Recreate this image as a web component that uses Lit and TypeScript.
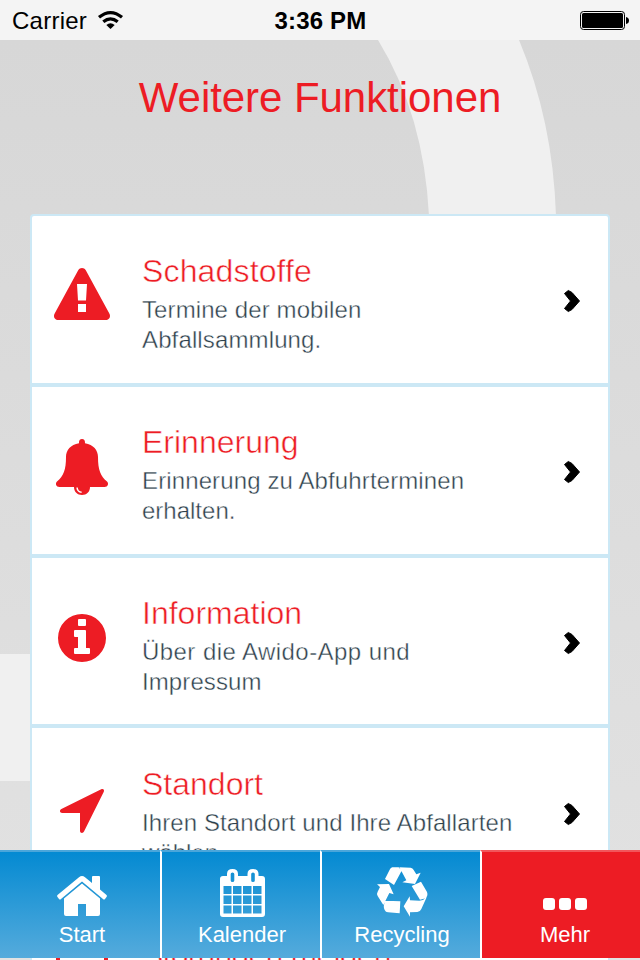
import { LitElement, html, css, svg } from "lit";
import { customElement } from "lit/decorators.js";

const icons = {
  warning: svg`<path fill-rule="evenodd" d="M24.2 2.2C26 -.7 30 -.7 31.8 2.2L55.2 45.2C57.2 48.6 55.2 52 51.6 52H4.4C.8 52-1.2 48.6.8 45.2ZM23 16L24 32.4H32L33 16ZM24 36V44H32V36Z"/>`,
  bell: svg`<path fill-rule="evenodd" d="M26 0C28 0 29.3 1.4 29 4.3C37.500 5.500 42 11.500 42 18C42 31 44.500 37 51 42.500C53 44.500 52 48 48.500 48H34C34 52.800 30.600 56 26 56S18 52.800 18 48H3.500C0 48-1 44.500 1 42.500C7.500 37 10 31 10 18C10 11.500 14.500 5.500 23 4.300C22.700 1.400 24 0 26 0ZM20.400 48.500C20.400 51.600 22.600 53.900 25.600 53.900V52.600C23.500 52.600 21.800 50.800 21.800 48.500Z"/>`,
  info: svg`<path fill-rule="evenodd" d="M24 0A24 24 0 1 0 24 48A24 24 0 1 0 24 0ZM20 6Q20 5 21 5H27Q28 5 28 6V11Q28 12 27 12H21Q20 12 20 11ZM16 17Q16 16 17 16H27Q28 16 28 17V34H31Q32 34 32 35V39Q32 40 31 40H17Q16 40 16 39V35Q16 34 17 34H20V23H17Q16 23 16 22Z"/>`,
  arrow: svg`<path d="M41.200.3C43.200-.6 44.600.8 43.800 2.700L24 42.500C23 44.700 20 44.200 20 41.700V24H2.200C-.3 24-.8 21 1.400 20Z"/>`,
  frame: svg`<path fill-rule="evenodd" d="M0 0H52V56H0ZM4 4V52H48V4Z"/>`,
};

/* s: letter spacing per text, box: height in which the icon is centred */
const rows = [
  { title: { t: "Schadstoffe", s: 0.15 }, lines: [{ t: "Termine der mobilen", s: 0.1 }, { t: "Abfallsammlung.", s: 0.13 }], icon: "warning", w: 56, h: 52, box: 156 },
  { title: { t: "Erinnerung", s: 0 }, lines: [{ t: "Erinnerung zu Abfuhrterminen", s: 0.12 }, { t: "erhalten.", s: 0 }], icon: "bell", w: 52, h: 56, box: 160 },
  { title: { t: "Information", s: 0 }, lines: [{ t: "Über die Awido-App und", s: 0.44 }, { t: "Impressum", s: 0.1 }], icon: "info", w: 48, h: 48, box: 160 },
  { title: { t: "Standort", s: 0 }, lines: [{ t: "Ihren Standort und Ihre Abfallarten", s: 0.1 }, { t: "wählen.", s: 0 }], icon: "arrow", w: 44, h: 44, box: 164 },
  { title: { t: "Störungen melden", s: -0.8 }, lines: [], icon: "frame", w: 52, h: 56, box: 156 },
] as const;

const tabs = [
  {
    label: "Start", cls: "first", icon: html`<svg class="home" width="50" height="40" viewBox="0 0 50 40"><path d="M25 0Q26.500 0 28 1.300L35 7V1Q35 0 36 0H42Q43 0 43 1V13.500L49.500 19Q50.500 20 49.500 21L48 23Q47 24 46 23L25 5.500L4 23Q3 24 2 23L.5 21Q-.5 20 .5 19L22 1.300Q23.500 0 25 0Z"/><path d="M25 7.500L43 22.500V38Q43 40 41 40H29V28H21V40H9Q7 40 7 38V22.500Z"/></svg>`,
  },
  {
    label: "Kalender", cls: "", icon: html`<svg class="cal" width="45" height="48" viewBox="0 0 45 48"><path fill-rule="evenodd" d="M3 7H7V5Q7 0 12.500 0T18 5V7H27.500V5Q27.500 0 33 0T38.500 5V7H42Q45 7 45 10V45Q45 48 42 48H3Q0 48 0 45V10Q0 7 3 7Z
      M10.700 5V11.500Q10.700 13 12.500 13T14.300 11.500V5Q14.300 3.500 12.500 3.500T10.700 5ZM31.200 5V11.500Q31.200 13 33 13T34.800 11.500V5Q34.800 3.500 33 3.500T31.200 5Z
      M3.500 17h8v8h-8zM13 17h8.500v8h-8.500zM23 17h8.500v8h-8.500zM33 17h8.500v8h-8.500zM3.500 26.500h8v8.500h-8zM13 26.500h8.500v8.500h-8.500zM23 26.500h8.500v8.500h-8.500zM33 26.500h8.500v8.500h-8.500zM3.500 36.500h8v8h-8zM13 36.500h8.500v8h-8.500zM23 36.500h8.500v8h-8.500zM33 36.500h8.500v8h-8.500z"/></svg>`,
  },
  {
    label: "Recycling", cls: "", icon: html`<svg class="cal" width="51" height="50" viewBox="171 291 153 150"><path d="M217 292L236 292L245 302L222 345L195 327L209 299Q212 293 217 292ZM238 292L272 293Q278 294 281 300L289 313L302 308L285 342L247 337L259 331ZM275 348L303 335L321 366Q325 376 317 385L300 389ZM251 409L269 379L270 391L298 392Q312 391 320 382L304 417Q301 425 292 426L270 427L270 440ZM196 392L241 394L239 430L204 427Q197 427 194 420Q188 408 196 392ZM171 343L207 342L221 373L208 369L190 405L173 378Q169 371 173 365L180 351Z"/></svg>`,
  },
  {
    label: "Mehr", cls: "active", icon: html`<svg class="dots" width="44" height="12" viewBox="0 0 44 12"><rect width="12" height="12" rx="3"/><rect x="16" width="12" height="12" rx="3"/><rect x="32" width="12" height="12" rx="3"/></svg>`,
  },
];

@customElement("app-root")
export class AppRoot extends LitElement {
  static styles = css`
    :host { display: block; position: relative; width: 640px; height: 960px; overflow: hidden;
      background: linear-gradient(#d7d7d7 40px, #e2e2e2); font-family: "Liberation Sans", Arial, sans-serif; }
    .backdrop { position: absolute; inset: 0; }
    .page { position: relative; height: 960px; display: flex; flex-direction: column; }
    .status { height: 40px; flex: none; background: #f4f4f4; display: grid; grid-template-columns: 1fr auto 1fr; align-items: center; padding: 0 11px 0 12px; font-size: 24px; color: #000; }
    .carrier { display: flex; align-items: center; gap: 11px; padding-top: 2px; }
    .carrier span { letter-spacing: .25px; }
    .carrier svg { margin-bottom: 2px; }
    .time { font-weight: bold; letter-spacing: .15px; padding-top: 2px; }
    .battery { justify-self: end; }
    h1 { margin: 0; flex: none; height: 174px; padding-top: 33px; box-sizing: border-box; text-align: center; font-weight: normal; font-size: 42px; line-height: 50px; color: #ed1c24; letter-spacing: -.05px; }
    .card { flex: none; margin: 0 30px; border: 2px solid #cce8f5; border-radius: 4px 4px 0 0; background: #fff; }
    .row { height: 171px; box-sizing: border-box; border-bottom: 4px solid #cce8f5; display: grid; grid-template-columns: 100px 1fr 48px; }
    .row.short { height: 170px; }
    .row.short + .row { padding-top: 1px; height: 172px; }
    .icon { display: flex; align-items: center; justify-content: center; fill: #ed1c24; }
    .copy { padding: 35px 0 0 10px; color: #2d404b; font-size: 24px; line-height: 30px; white-space: nowrap; -webkit-text-stroke: .4px #fff; }
    .title { font-size: 32px; line-height: 40px; color: #ed1c24; margin-bottom: 4px; -webkit-text-stroke-width: .5px; }
    .chev { padding-top: 73px; }
    .tabs { position: absolute; left: 0; top: 850px; width: 640px; height: 108px; display: grid; grid-template-columns: repeat(4, 160px); }
    .tab { box-sizing: border-box; border-top: 2px solid #4ba6da; border-left: 2px solid #fff; padding-left: 2px; background: linear-gradient(#048ad2, #55abdc); display: flex; flex-direction: column; align-items: center; color: #fff; fill: #fff; font-size: 22px; }
    .tab.first { border-left: 0; padding-left: 4px; }
    .tab.active { background: #ed1c24; border-top-color: #f2565b; padding-left: 8px; }
    .glyph { height: 66px; display: flex; align-items: end; }
    .home { margin-bottom: 2px; }
    .cal { margin-bottom: 1px; }
    .dots { margin-bottom: 8px; }
    .label { line-height: 26px; margin-top: 4px; }
    svg { display: block; overflow: visible; }
  `;

  render() {
    return html`
      <svg class="backdrop" width="640" height="960"><path fill="#f0f0f0" d="M378 40Q424 115 429 216H556Q553 121 519 40ZM0 654H32V781H0Z"/></svg>
      <div class="page">
        <div class="status">
          <div class="carrier"><span>Carrier</span>
            <svg width="25" height="18" viewBox="0 0 25 18"><g fill="none" stroke="#000" stroke-width="3.200"><path d="M1 6.300Q12.500-3.200 24 6.300M5.300 10.800Q12.500 4.800 19.700 10.800"/></g><path d="M8.300 14Q12.500 10.300 16.700 14L12.500 18Z"/></svg>
          </div>
          <div class="time">3:36 PM</div>
          <svg class="battery" width="49" height="19" viewBox="0 0 49 19"><rect x=".5" y=".5" width="44" height="18" rx="3" fill="none" stroke="#000"/><rect x="2" y="2" width="41" height="15" rx="1.500"/><path d="M46 6Q49 6.500 49 9.500T46 13Z"/></svg>
        </div>
        <h1>Weitere Funktionen</h1>
        <div class="card">
          ${rows.map((r, i) => html`<div class="row ${i === 2 ? "short" : ""}">
            <div class="icon" style="height:${r.box}px"><svg width=${r.w} height=${r.h} viewBox="0 0 ${r.w} ${r.h}">${icons[r.icon]}</svg></div>
            <div class="copy"><div class="title" style="letter-spacing:${r.title.s}px">${r.title.t}</div>${r.lines.map((l) => html`<div style="letter-spacing:${l.s}px">${l.t}</div>`)}</div>
            <div class="chev"><svg width="20" height="24" viewBox="0 0 20 24"><path stroke="#000" stroke-linejoin="round" d="M4.500 4.500L8.300 1.500L12 3.500L19.500 12L12 20.500L8.300 22.500L4.500 19.500L10.500 12Z"/></svg></div>
          </div>`)}
        </div>
      </div>
      <nav class="tabs">
        ${tabs.map((t) => html`<div class="tab ${t.cls}"><div class="glyph">${t.icon}</div><div class="label">${t.label}</div></div>`)}
      </nav>`;
  }
}
